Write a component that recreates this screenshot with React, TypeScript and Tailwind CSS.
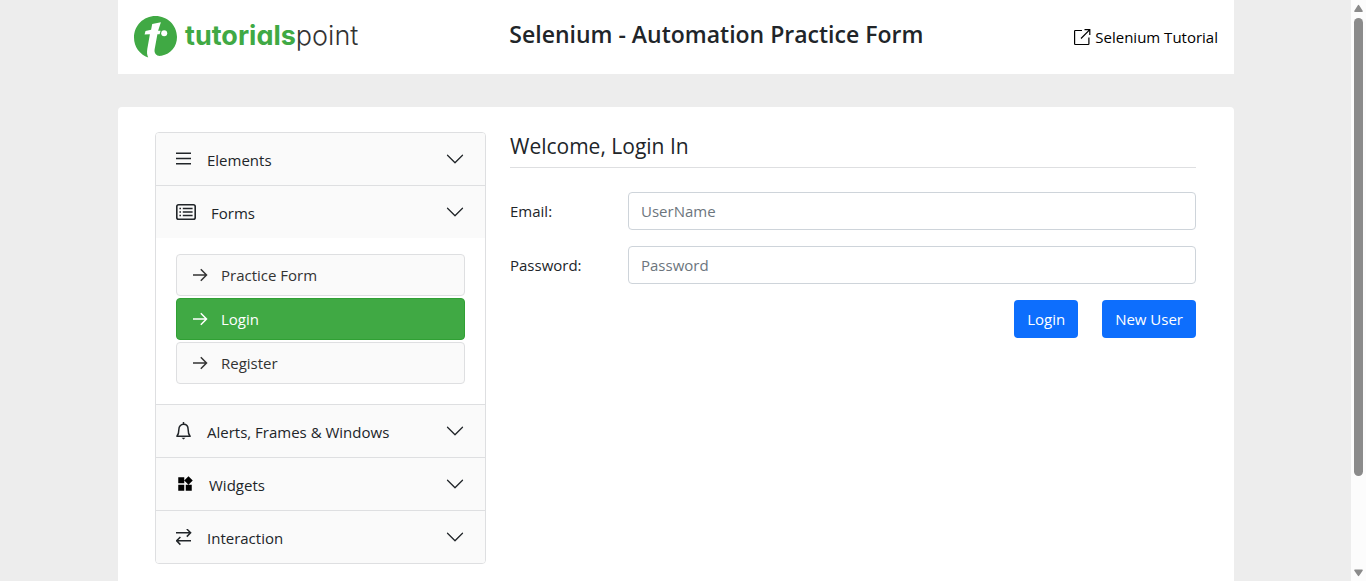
import type { ReactNode } from 'react';
import { BsChevronDown } from 'react-icons/bs';
import { MdWidgets } from 'react-icons/md';

function Logo() {
  return (
    <a href="#home" className="flex items-center gap-2">
      <svg width="43" height="42" viewBox="0 0 43 42" aria-hidden="true">
        <path
          fill="#40a944"
          d="M21.5 0C33.400 0 43 9.300 43 21C43 30.500 36.800 38 27.500 39.800C22.500 40.600 20 37.500 20.600 33.500L23.400 18.300H25.600L26.600 14.800H24.100L26.900 6.300L18.200 8L17.100 13.800L11.500 15L10.600 18.600L15.900 18.300L13.300 33C12.800 36.500 13 39 14.200 41.500C5.800 38.500 0 31 0 21.500C0 9.500 9.600 0 21.500 0Z"
        />
        <circle cx="30.200" cy="17.200" r="3" fill="#fff" />
      </svg>
      <span className="pb-[2px] font-['Inter'] text-[27px] leading-8 text-[#333] [font-feature-settings:'cv11']">
        <span className="font-bold text-[#40a944]">tutorials</span>
        <span className="font-light">point</span>
      </span>
    </a>
  );
}

function ExternalIcon() {
  return (
    <svg width="17" height="17" viewBox="0 0 17 17" fill="none" stroke="#000" strokeWidth="1.2" aria-hidden="true">
      <path d="M8 1.500H1.200Q.6 1.500 .6 2.200V14.800Q.6 15.500 1.200 15.500H14.200Q14.900 15.500 14.900 14.800V8.500M10.500 .6H15.800V6M7 9.500L15.800 .6" />
    </svg>
  );
}

function LinesIcon() {
  return (
    <svg width="16" height="16" viewBox="0 0 16 16" stroke="#212529" strokeWidth="1.500" aria-hidden="true">
      <path d="M0 2.200H15M0 7.500H15M0 12.800H15" />
    </svg>
  );
}

function FormsIcon() {
  return (
    <svg width="20" height="16" viewBox="0 0 20 16" fill="none" stroke="#212529" strokeWidth="1.600" aria-hidden="true">
      <rect x=".8" y=".8" width="18.400" height="14.400" rx="1.800" />
      <path d="M3.400 4.500H5M3.400 8H5M3.400 11.500H5M6.800 4.500H16.600M6.800 8H16.600M6.800 11.500H16.600" strokeWidth="1.500" />
    </svg>
  );
}

function BellIcon() {
  return (
    <svg width="16" height="18" viewBox="0 0 16 18" fill="none" stroke="#212529" strokeWidth="1.500" aria-hidden="true">
      <path d="M.9 14.300C2.600 12.200 2.900 10 2.900 7.300C2.900 4.300 4.800 2.300 7.500 2.300S12.100 4.300 12.100 7.300C12.100 10 12.400 12.200 14.100 14.300Z" strokeLinejoin="round" />
      <path d="M7.500 0V2.300" />
      <path d="M5.500 15.800H9.500L7.500 17.600Z" fill="#212529" stroke="none" />
    </svg>
  );
}

function SwapIcon() {
  return (
    <svg width="16" height="17" viewBox="0 0 16 17" fill="none" stroke="#212529" strokeWidth="1.500" aria-hidden="true">
      <path d="M0 3.800H14.500M10.800 0L14.600 3.800L10.800 7.600M15 11.800H.8M4.400 8L.6 11.800L4.400 15.600" />
    </svg>
  );
}

function ArrowIcon() {
  return (
    <svg width="16" height="14" viewBox="0 0 16 14" fill="none" stroke="currentColor" strokeWidth="1.500" aria-hidden="true">
      <path d="M0 7H13.500M7.800 1.300L13.500 7L7.800 12.700" />
    </svg>
  );
}

function SectionHeader({ icon, label, open = false }: { icon: ReactNode; label: string; open?: boolean }) {
  return (
    <h2>
      <button
        type="button"
        aria-expanded={open}
        className="flex h-[52px] w-full items-center gap-[15px] bg-[#fafafa] px-5 text-left text-[#212529]"
      >
        <span>{icon}</span>
        <span className="flex-1 pt-[2px]">{label}</span>
        <BsChevronDown size={20} aria-hidden="true" />
      </button>
    </h2>
  );
}

const pages = [
  { label: 'Practice Form', active: false },
  { label: 'Login', active: true },
  { label: 'Register', active: false },
];

function Sidebar() {
  return (
    <nav className="w-[331px] shrink-0 divide-y divide-[#dedfe1] self-start overflow-hidden rounded border border-[#dedfe1]">
      <SectionHeader icon={<LinesIcon />} label="Elements" />
      <div>
        <SectionHeader icon={<FormsIcon />} label="Forms" open />
        <ul className="flex flex-col gap-[2px] px-5 pt-4 pb-5">
          {pages.map((page) => (
            <li key={page.label}>
              <a
                href="#page"
                className={
                  page.active
                    ? 'flex h-[42px] items-center gap-3 rounded border border-[#30a034] bg-[#40a944] px-4 text-white'
                    : 'flex h-[42px] items-center gap-3 rounded border border-[#dedfe1] bg-[#fafafa] px-4 text-[#333]'
                }
              >
                <ArrowIcon />
                {page.label}
              </a>
            </li>
          ))}
        </ul>
      </div>
      <SectionHeader icon={<BellIcon />} label="Alerts, Frames & Windows" />
      <SectionHeader icon={<MdWidgets size={18} color="#000" />} label="Widgets" />
      <SectionHeader icon={<SwapIcon />} label="Interaction" />
    </nav>
  );
}

function Field({ id, label, type, placeholder }: { id: string; label: string; type: string; placeholder: string }) {
  return (
    <div className="flex items-center">
      <label htmlFor={id} className="w-[118px] shrink-0">
        {label}
      </label>
      <input
        id={id}
        type={type}
        placeholder={placeholder}
        className="h-[38px] min-w-0 flex-1 rounded border border-[#ced4da] bg-white px-3 placeholder:text-[#6c757d]"
      />
    </div>
  );
}

function LoginForm() {
  return (
    <section className="min-w-0 flex-1">
      <h1 className="border-b border-[#dedfe1] pb-[6px] text-[21px] leading-[29px]">Welcome, Login In</h1>
      <form className="mt-6 flex flex-col gap-4">
        <Field id="email" label="Email:" type="email" placeholder="UserName" />
        <Field id="password" label="Password:" type="password" placeholder="Password" />
        <div className="flex justify-end gap-6">
          <button type="button" className="h-[38px] rounded bg-[#0d6efd] px-[13px] text-white">
            Login
          </button>
          <button type="button" className="h-[38px] rounded bg-[#0d6efd] px-[13px] text-white">
            New User
          </button>
        </div>
      </form>
    </section>
  );
}

function ScrollRail() {
  return (
    <div aria-hidden="true" className="sticky top-0 flex h-screen w-[15px] shrink-0 flex-col items-center bg-[#fcfcfc] py-[4px]">
      <svg width="9" height="8" viewBox="0 0 9 8" fill="#8b8b8b">
        <path d="M3.700 1.500Q4.500 .2 5.300 1.500L8.800 7Q9 8 8 8H1Q0 8 .2 7Z" />
      </svg>
      <div className="flex w-full flex-1 flex-col items-center pt-[6px] pb-[6px]">
        <div className="h-[84%] w-[9px] rounded-full bg-[#8b8b8b]" />
      </div>
      <svg width="9" height="8" viewBox="0 0 9 8" fill="#8b8b8b">
        <path d="M3.700 6.500Q4.500 7.800 5.300 6.500L8.800 1.500Q9 .5 8 .5H1Q0 .5 .2 1.500Z" />
      </svg>
    </div>
  );
}

export default function App() {
  return (
    <div className="flex min-h-screen bg-[#ededed] font-['Open_Sans',sans-serif] text-[15px] leading-6 text-[#212529]">
      <div className="flex min-w-0 flex-1 flex-col pr-[117px] pl-[118px]">
        <header className="flex h-[74px] items-center justify-between bg-white px-4">
          <Logo />
          <p className="pb-[6px] text-[23px] font-semibold">Selenium - Automation Practice Form</p>
          <a href="#tutorial" className="flex items-center gap-1 text-black">
            <ExternalIcon />
            Selenium Tutorial
          </a>
        </header>
        <main className="mt-[33px] flex flex-1 gap-6 rounded-t bg-white pt-[25px] pr-[38px] pb-4 pl-[37px]">
          <Sidebar />
          <LoginForm />
        </main>
      </div>
      <ScrollRail />
    </div>
  );
}
